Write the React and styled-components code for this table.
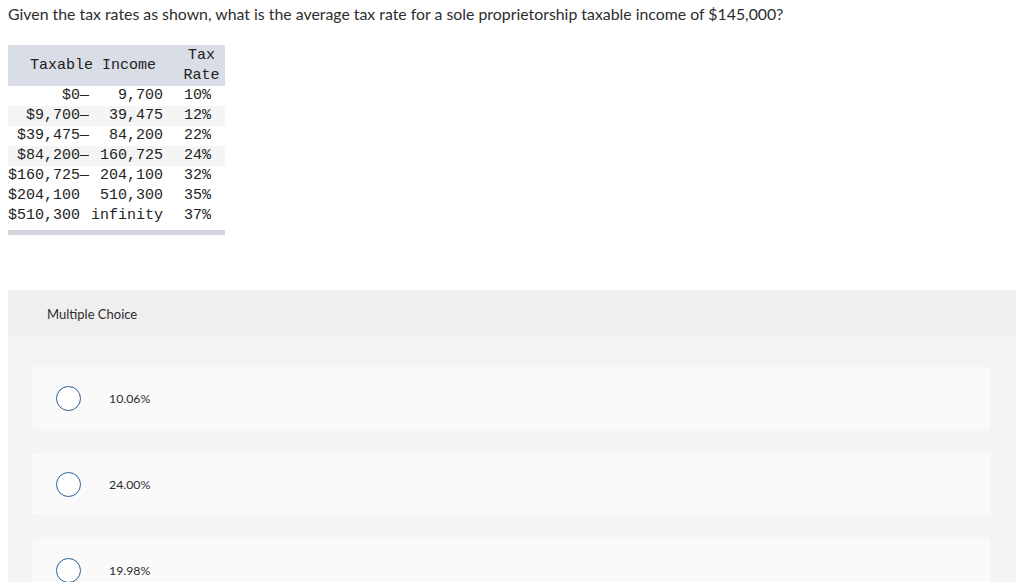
import styled, { createGlobalStyle } from 'styled-components';

const GlobalStyle = createGlobalStyle`
  body {
    margin: 0;
    background: #ffffff;
    font-family: Lato, "Open Sans", sans-serif;
    color: #333333;
  }
`;

const Page = styled.div`
  padding: 4px 8px 40px 8px;
`;

const Question = styled.p`
  margin: 0;
  font-size: 15.85px;
  line-height: 20px;
  color: #2d2d2d;
`;

const TaxTable = styled.div`
  margin-top: 21px;
  width: 217px;
  display: grid;
  grid-template-columns: 81px 89px 47px;
  font-family: "Liberation Mono", "Courier New", monospace;
  font-size: 15px;
  line-height: 20px;
  color: #222;
`;

const HeadCell = styled.div`
  background: #d9dde5;
  display: flex;
  align-items: center;
  justify-content: center;
  text-align: center;
  grid-column: ${p => p.span ? 'span 2' : 'auto'};
  height: 41px;
`;

const Cell = styled.div`
  background: ${p => p.striped ? '#f5f5f5' : 'transparent'};
  text-align: ${p => p.align || 'right'};
  padding-right: ${p => p.padR || 0}px;
  padding-left: ${p => p.padL || 0}px;
  white-space: pre;
  height: 20px;
`;

const TableBar = styled.div`
  width: 217px;
  height: 5px;
  margin-top: 4px;
  background: #d0d5de;
`;

const ChoicePanel = styled.section`
  margin-top: 55px;
  background: #f4f4f4;
  padding-bottom: 30px;
`;

const PanelHeader = styled.div`
  background: #efefef;
  height: 47px;
  display: flex;
  align-items: center;
  padding-left: 39px;
  font-size: 13px;
  color: #2d2d2d;
`;

const Options = styled.div`
  padding: 30px 26px 0 24px;
  display: flex;
  flex-direction: column;
  gap: 24px;
`;

const Option = styled.label`
  height: 62px;
  background: #fafafa;
  border-radius: 2px;
  display: flex;
  align-items: center;
  padding-left: 24px;
  font-size: 12.3px;
  color: #2d2d2d;
  cursor: pointer;
`;

const Radio = styled.span`
  width: 23px;
  height: 23px;
  border: 1.5px solid #2c5f94;
  border-radius: 50%;
  background: #fff;
  margin-right: 28px;
  flex-shrink: 0;
`;

const rows = [
  ['$0\u2014', '9,700', '10%'],
  ['$9,700\u2014', '39,475', '12%'],
  ['$39,475\u2014', '84,200', '22%'],
  ['$84,200\u2014', '160,725', '24%'],
  ['$160,725\u2014', '204,100', '32%'],
  ['$204,100 ', '510,300', '35%'],
  ['$510,300 ', 'infinity', '37%'],
];

const choices = ['10.06%', '24.00%', '19.98%'];

export default function App() {
  return (
    <Page>
      <GlobalStyle />
      <Question>
        Given the tax rates as shown, what is the average tax rate for a sole proprietorship taxable income of $145,000?
      </Question>
      <TaxTable>
        <HeadCell span>Taxable Income</HeadCell>
        <HeadCell>Tax<br />Rate</HeadCell>
        {rows.map((r, i) => {
          const striped = i % 2 === 1 && i < 4;
          return [
            <Cell key={i + 'a'} striped={striped}>{r[0]}</Cell>,
            <Cell key={i + 'b'} striped={striped} padR={15}>{r[1]}</Cell>,
            <Cell key={i + 'c'} striped={striped} align="left" padL={6}>{r[2]}</Cell>,
          ];
        })}
      </TaxTable>
      <TableBar />
      <ChoicePanel>
        <PanelHeader>Multiple Choice</PanelHeader>
        <Options>
          {choices.map(c => (
            <Option key={c}>
              <Radio />
              {c}
            </Option>
          ))}
        </Options>
      </ChoicePanel>
    </Page>
  );
}
